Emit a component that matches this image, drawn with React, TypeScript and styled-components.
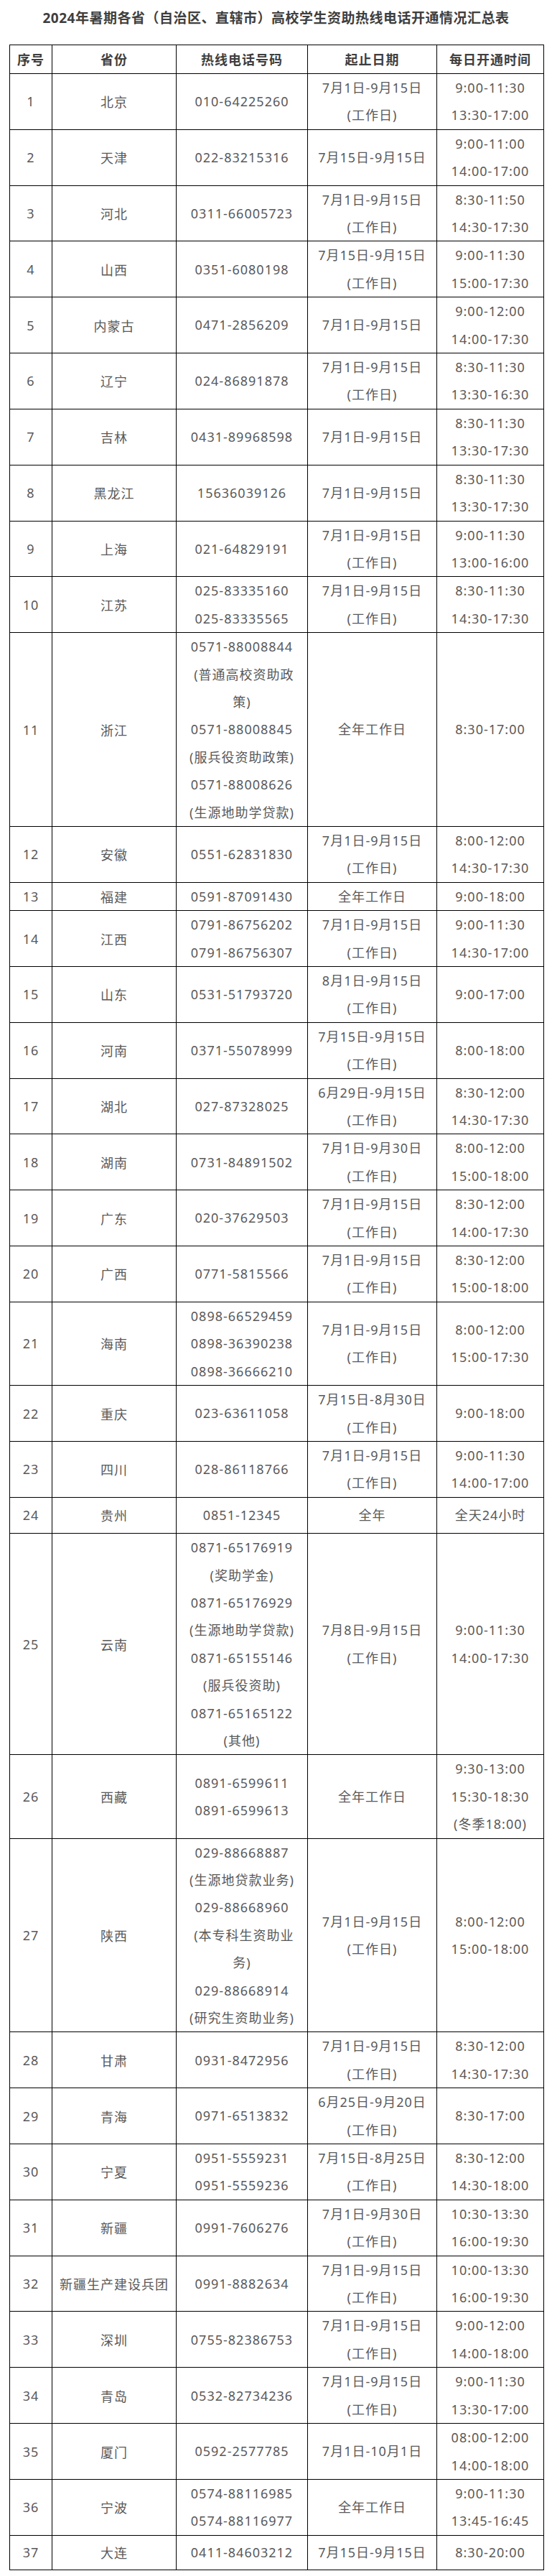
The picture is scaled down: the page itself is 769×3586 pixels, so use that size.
import React from 'react'
import styled, { createGlobalStyle } from 'styled-components'

const GlobalStyle = createGlobalStyle`
  html, body {
    margin: 0;
    padding: 0;
    background: #fff;
  }
  body {
    font-family: "Noto Sans", "Noto Sans CJK SC", sans-serif;
  }
`

type Row = {
  name: string
  phones: string[]
  dates: string[]
  times: string[]
  extra?: number
}

const rows: Row[] = [
  { name: '北京', phones: ['010-64225260'], dates: ['7月1日-9月15日', '(工作日)'], times: ['9:00-11:30', '13:30-17:00'] },
  { name: '天津', phones: ['022-83215316'], dates: ['7月15日-9月15日'], times: ['9:00-11:00', '14:00-17:00'] },
  { name: '河北', phones: ['0311-66005723'], dates: ['7月1日-9月15日', '(工作日)'], times: ['8:30-11:50', '14:30-17:30'] },
  { name: '山西', phones: ['0351-6080198'], dates: ['7月15日-9月15日', '(工作日)'], times: ['9:00-11:30', '15:00-17:30'] },
  { name: '内蒙古', phones: ['0471-2856209'], dates: ['7月1日-9月15日'], times: ['9:00-12:00', '14:00-17:30'] },
  { name: '辽宁', phones: ['024-86891878'], dates: ['7月1日-9月15日', '(工作日)'], times: ['8:30-11:30', '13:30-16:30'] },
  { name: '吉林', phones: ['0431-89968598'], dates: ['7月1日-9月15日'], times: ['8:30-11:30', '13:30-17:30'] },
  { name: '黑龙江', phones: ['15636039126'], dates: ['7月1日-9月15日'], times: ['8:30-11:30', '13:30-17:30'] },
  { name: '上海', phones: ['021-64829191'], dates: ['7月1日-9月15日', '(工作日)'], times: ['9:00-11:30', '13:00-16:00'] },
  { name: '江苏', phones: ['025-83335160', '025-83335565'], dates: ['7月1日-9月15日', '(工作日)'], times: ['8:30-11:30', '14:30-17:30'] },
  {
    name: '浙江',
    phones: ['0571-88008844', '\u00a0(普通高校资助政', '策)', '0571-88008845', '(服兵役资助政策)', '0571-88008626', '(生源地助学贷款)'],
    dates: ['全年工作日'],
    times: ['8:30-17:00'],
  },
  { name: '安徽', phones: ['0551-62831830'], dates: ['7月1日-9月15日', '(工作日)'], times: ['8:00-12:00', '14:30-17:30'] },
  { name: '福建', phones: ['0591-87091430'], dates: ['全年工作日'], times: ['9:00-18:00'] },
  { name: '江西', phones: ['0791-86756202', '0791-86756307'], dates: ['7月1日-9月15日', '(工作日)'], times: ['9:00-11:30', '14:30-17:00'] },
  { name: '山东', phones: ['0531-51793720'], dates: ['8月1日-9月15日', '(工作日)'], times: ['9:00-17:00'] },
  { name: '河南', phones: ['0371-55078999'], dates: ['7月15日-9月15日', '(工作日)'], times: ['8:00-18:00'] },
  { name: '湖北', phones: ['027-87328025'], dates: ['6月29日-9月15日', '(工作日)'], times: ['8:30-12:00', '14:30-17:30'] },
  { name: '湖南', phones: ['0731-84891502'], dates: ['7月1日-9月30日', '(工作日)'], times: ['8:00-12:00', '15:00-18:00'] },
  { name: '广东', phones: ['020-37629503'], dates: ['7月1日-9月15日', '(工作日)'], times: ['8:30-12:00', '14:00-17:30'] },
  { name: '广西', phones: ['0771-5815566'], dates: ['7月1日-9月15日', '(工作日)'], times: ['8:30-12:00', '15:00-18:00'] },
  { name: '海南', phones: ['0898-66529459', '0898-36390238', '0898-36666210'], dates: ['7月1日-9月15日', '(工作日)'], times: ['8:00-12:00', '15:00-17:30'] },
  { name: '重庆', phones: ['023-63611058'], dates: ['7月15日-8月30日', '(工作日)'], times: ['9:00-18:00'] },
  { name: '四川', phones: ['028-86118766'], dates: ['7月1日-9月15日', '(工作日)'], times: ['9:00-11:30', '14:00-17:00'] },
  { name: '贵州', phones: ['0851-12345'], dates: ['全年'], times: ['全天24小时'], extra: 11 },
  {
    name: '云南',
    phones: ['0871-65176919', '(奖助学金)', '0871-65176929', '(生源地助学贷款)', '0871-65155146', '(服兵役资助)', '0871-65165122', '(其他)'],
    dates: ['7月8日-9月15日', '(工作日)'],
    times: ['9:00-11:30', '14:00-17:30'],
  },
  { name: '西藏', phones: ['0891-6599611', '0891-6599613'], dates: ['全年工作日'], times: ['9:30-13:00', '15:30-18:30', '(冬季18:00)'] },
  {
    name: '陕西',
    phones: ['029-88668887', '(生源地贷款业务)', '029-88668960', '\u00a0(本专科生资助业', '务)', '029-88668914', '(研究生资助业务)'],
    dates: ['7月1日-9月15日', '(工作日)'],
    times: ['8:00-12:00', '15:00-18:00'],
  },
  { name: '甘肃', phones: ['0931-8472956'], dates: ['7月1日-9月15日', '(工作日)'], times: ['8:30-12:00', '14:30-17:30'] },
  { name: '青海', phones: ['0971-6513832'], dates: ['6月25日-9月20日', '(工作日)'], times: ['8:30-17:00'] },
  { name: '宁夏', phones: ['0951-5559231', '0951-5559236'], dates: ['7月15日-8月25日', '(工作日)'], times: ['8:30-12:00', '14:30-18:00'] },
  { name: '新疆', phones: ['0991-7606276'], dates: ['7月1日-9月30日', '(工作日)'], times: ['10:30-13:30', '16:00-19:30'] },
  { name: '新疆生产建设兵团', phones: ['0991-8882634'], dates: ['7月1日-9月15日', '(工作日)'], times: ['10:00-13:30', '16:00-19:30'] },
  { name: '深圳', phones: ['0755-82386753'], dates: ['7月1日-9月15日', '(工作日)'], times: ['9:00-12:00', '14:00-18:00'] },
  { name: '青岛', phones: ['0532-82734236'], dates: ['7月1日-9月15日', '(工作日)'], times: ['9:00-11:30', '13:30-17:00'] },
  { name: '厦门', phones: ['0592-2577785'], dates: ['7月1日-10月1日'], times: ['08:00-12:00', '14:00-18:00'] },
  { name: '宁波', phones: ['0574-88116985', '0574-88116977'], dates: ['全年工作日'], times: ['9:00-11:30', '13:45-16:45'] },
  { name: '大连', phones: ['0411-84603212'], dates: ['7月15日-9月15日'], times: ['8:30-20:00'], extra: 9 },
]

const LINE = 38.4

const Page = styled.div`
  width: 769px;
  padding: 6px 0 11px;
  box-sizing: border-box;
`

const Title = styled.h1`
  margin: 0 0 18px;
  text-align: center;
  font-size: 19px;
  line-height: 38px;
  letter-spacing: 0.5px;
  font-weight: 700;
  color: #3e3e3e;
`

const Table = styled.table`
  margin-left: 13px;
  width: 744px;
  table-layout: fixed;
  border-collapse: collapse;
  border: 1px solid #000;
`

const Col = styled.col<{ w: number }>`
  width: ${({ w }) => w}px;
`

const HeadCell = styled.th`
  height: 39px;
  padding: 0;
  border: 1px solid #000;
  text-align: center;
  vertical-align: middle;
  font-size: 18px;
  line-height: 38px;
  letter-spacing: 1px;
  font-weight: 700;
  color: #3e3e3e;
`

const BodyRow = styled.tr<{ h: number }>`
  height: ${({ h }) => h}px;
`

const Cell = styled.td`
  padding: 0;
  border: 1px solid #000;
  text-align: center;
  vertical-align: middle;
  font-size: 18px;
  letter-spacing: 1px;
  color: #595959;
`

const Line = styled.div`
  line-height: ${LINE}px;
  white-space: nowrap;
`

const Lines = ({ items }: { items: string[] }) => (
  <>
    {items.map((t, i) => (
      <Line key={i}>{t}</Line>
    ))}
  </>
)

export default function App() {
  return (
    <Page>
      <GlobalStyle />
      <Title>2024年暑期各省（自治区、直辖市）高校学生资助热线电话开通情况汇总表</Title>
      <Table>
        <colgroup>
          <Col w={59} />
          <Col w={173} />
          <Col w={183} />
          <Col w={180} />
          <Col w={149} />
        </colgroup>
        <thead>
          <tr>
            <HeadCell>序号</HeadCell>
            <HeadCell>省份</HeadCell>
            <HeadCell>热线电话号码</HeadCell>
            <HeadCell>起止日期</HeadCell>
            <HeadCell>每日开通时间</HeadCell>
          </tr>
        </thead>
        <tbody>
          {rows.map((r, i) => {
            const n = Math.max(r.phones.length, r.dates.length, r.times.length)
            return (
              <BodyRow key={r.name} h={n * LINE + 1 + (r.extra ?? 0)}>
                <Cell>{i + 1}</Cell>
                <Cell>{r.name}</Cell>
                <Cell><Lines items={r.phones} /></Cell>
                <Cell><Lines items={r.dates} /></Cell>
                <Cell><Lines items={r.times} /></Cell>
              </BodyRow>
            )
          })}
        </tbody>
      </Table>
    </Page>
  )
}
